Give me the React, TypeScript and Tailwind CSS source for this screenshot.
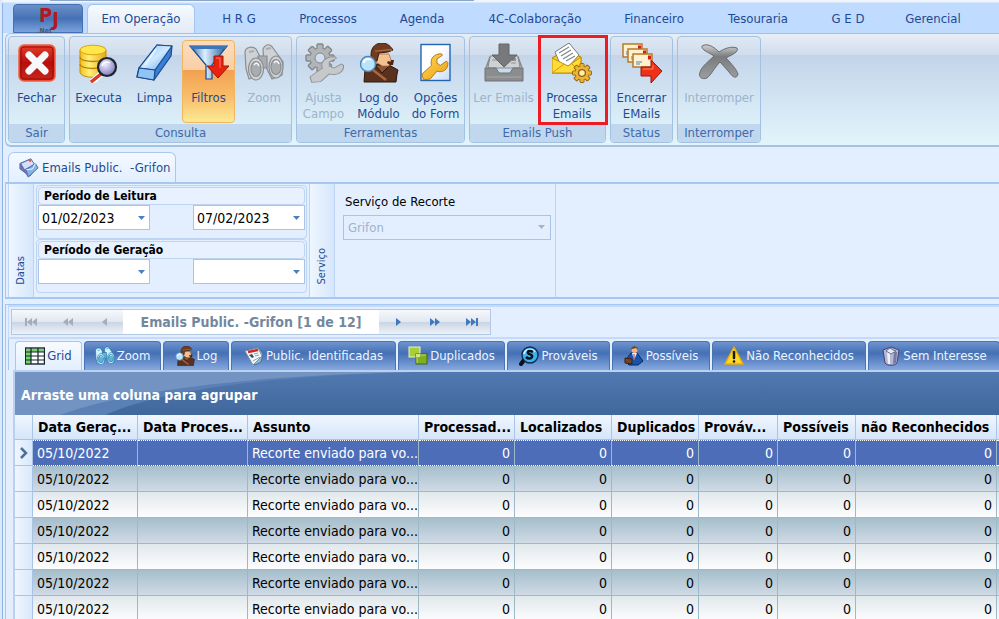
import { useState } from "react";
import type { ReactNode } from "react";
import clsx from "clsx";

/* ---------- Icons ---------- */

function LogoPJ() {
  return (
    <span className="flex items-start justify-center font-['DejaVu_Sans_Condensed',sans-serif] font-bold text-[#b01a20]">
      <span className="flex flex-col items-end">
        <span className="text-xl leading-5">P</span>
        <span className="pt-0.5 text-[7px] leading-2 text-[#4b5560]">.Net</span>
      </span>
      <span className="pt-1 text-xl leading-5">J</span>
    </span>
  );
}

function CloseIcon() {
  return (
    <svg viewBox="0 0 40 40" className="size-10">
      <defs>
        <linearGradient id="closeRed" x1="0" y1="0" x2="0" y2="1">
          <stop offset="0" stopColor="#e2402c" />
          <stop offset="0.5" stopColor="#b80d0c" />
          <stop offset="1" stopColor="#c8281c" />
        </linearGradient>
      </defs>
      <rect x="2" y="2" width="36" height="36" rx="5" fill="url(#closeRed)" stroke="#f0603f" strokeWidth="1.5" />
      <rect x="4" y="4" width="32" height="32" rx="3" fill="none" stroke="#9c0a08" />
      <path d="m12 12 16 16M28 12 12 28" stroke="#f6f8fb" strokeWidth="7" strokeLinecap="round" />
    </svg>
  );
}

function DatabaseIcon() {
  return (
    <svg viewBox="0 0 40 40" className="size-10">
      <defs>
        <linearGradient id="dbGold" x1="0" y1="0" x2="1" y2="0">
          <stop offset="0" stopColor="#f4bf1a" />
          <stop offset="0.35" stopColor="#fff07a" />
          <stop offset="1" stopColor="#e8a911" />
        </linearGradient>
        <radialGradient id="lensViolet" cx="0.4" cy="0.35" r="0.7">
          <stop offset="0" stopColor="#f1f0ff" />
          <stop offset="1" stopColor="#7775b5" />
        </radialGradient>
      </defs>
      <path d="M1 7v22c0 7 26 7 26 0V7Z" fill="url(#dbGold)" stroke="#c48d0b" />
      <path d="M1 14c0 6 26 6 26 0M1 21c0 6 26 6 26 0" fill="none" stroke="#b8860b" strokeWidth="1.3" />
      <ellipse cx="14" cy="7" rx="13" ry="4.8" fill="#ffe64a" stroke="#d9a515" />
      <path d="m22 31-9 8" stroke="#fff" strokeWidth="6" />
      <path d="m22 31-10 8" stroke="#d83a23" strokeWidth="3.5" />
      <circle cx="28" cy="24" r="9" fill="url(#lensViolet)" stroke="#20242e" strokeWidth="2.2" />
      <path d="M23 23c1-4 5-5 8-3" fill="none" stroke="#fff" strokeWidth="1.5" />
    </svg>
  );
}

function EraserIcon() {
  return (
    <svg viewBox="0 0 40 40" className="size-10">
      <defs>
        <linearGradient id="eraserBlue" x1="0" y1="0" x2="1" y2="1">
          <stop offset="0" stopColor="#8ec6f7" />
          <stop offset="0.5" stopColor="#cfe8ff" />
          <stop offset="1" stopColor="#5ba0ea" />
        </linearGradient>
      </defs>
      <g stroke="#174a8e" strokeWidth="1.2" strokeLinejoin="round">
        <path d="M22 2 37 3 36 13 19 37 2 34 4 25Z" fill="#3a7fd5" />
        <path d="M22 2 37 3 20 27 4 25Z" fill="url(#eraserBlue)" />
        <path d="m4 25 16 2-1 10L2 34Z" fill="#8fc4f5" />
      </g>
      <path d="M21 6 10 22" stroke="#fff" strokeWidth="1.5" opacity=".7" />
    </svg>
  );
}

function FunnelIcon() {
  return (
    <svg viewBox="0 0 40 40" className="size-10">
      <defs>
        <linearGradient id="funnelBlue" x1="0" y1="0" x2="1" y2="0">
          <stop offset="0" stopColor="#2d66a8" />
          <stop offset="0.4" stopColor="#dcf0ff" />
          <stop offset="1" stopColor="#235795" />
        </linearGradient>
      </defs>
      <path d="M1 3h37L23 22v14h-6V22Z" fill="url(#funnelBlue)" stroke="#17498b" strokeWidth="1.2" />
      <path d="M1 3h37l-2 3H3Z" fill="#3c76b8" />
      <path d="M25 13h9v10h6L29 35 18 23h7Z" fill="#e9220f" stroke="#9f1409" />
      <path d="M27 15h4v10" fill="none" stroke="#ff7a5e" />
    </svg>
  );
}

function BinocularsIcon({ small }: { small?: boolean }) {
  const dark = small ? "#186d9c" : "#8a8e92";
  const mid = small ? "#5cb7df" : "#a9adb0";
  const light = small ? "#d5f3ff" : "#cfd2d4";
  return (
    <svg viewBox="0 0 40 40" className={small ? "size-5" : "size-10"}>
      <g stroke={dark} strokeWidth="1.2">
        <path d="M1 9C1 5 8 2 12 6l7 13-4 13-10 4L2 26Z" fill={light} />
        <path d="M19 6c3-6 8-5 10-1l10 14-1 13-10 4-8-16Z" fill={light} />
        <path d="M14 13h9v12h-9Z" fill={mid} />
        <ellipse cx="12" cy="26" rx="7.5" ry="11" fill={light} />
        <ellipse cx="12" cy="26" rx="5" ry="7.5" fill={mid} />
        <ellipse cx="32" cy="24" rx="7" ry="11" fill={light} />
        <ellipse cx="32" cy="24" rx="5" ry="7.5" fill={mid} />
      </g>
      <path d="M10 22c2-3 4-2 5 1M30 20c2-3 4-2 5 1" stroke="#f4f6f7" strokeWidth="1.5" fill="none" />
      <path d="m5 9 5-1M22 6l5-1" stroke={mid} strokeWidth="2" />
    </svg>
  );
}

function GearShape({ fill, stroke }: { fill: string; stroke: string }) {
  return (
    <g>
      {[0, 45, 90, 135].map((a) => (
        <rect key={a} x="-3" y="-14" width="6" height="28" rx="1" transform={`rotate(${a})`} fill={fill} stroke={stroke} strokeWidth="1.4" />
      ))}
      <circle r="10" fill={fill} stroke={stroke} strokeWidth="1" />
      {[0, 45, 90, 135].map((a) => (
        <rect key={a} x="-2.3" y="-11" width="4.6" height="22" transform={`rotate(${a})`} fill={fill} />
      ))}
    </g>
  );
}

function WrenchShape({ fill, stroke }: { fill: string; stroke: string }) {
  return (
    <path
      d="M2 40 0 32 14 20C11 11 18 3 29 4l1 2-8 5 0 6 5 3 9-6 2 2c1 9-7 15-16 12L12 39Z"
      fill={fill}
      stroke={stroke}
      strokeWidth="1.2"
      strokeLinejoin="round"
    />
  );
}

function AdjustIcon() {
  return (
    <svg viewBox="0 0 40 40" className="size-10">
      <g transform="translate(16 15)">
        <GearShape fill="#b2b5b7" stroke="#85888b" />
        <circle r="5" fill="#d1deed" stroke="#85888b" />
      </g>
      <g transform="translate(6 11) scale(.88 .71)">
        <WrenchShape fill="#c6c8ca" stroke="#909396" />
      </g>
    </svg>
  );
}

function DetectiveIcon({ small }: { small?: boolean }) {
  return (
    <svg viewBox="0 0 40 40" className={small ? "size-5" : "size-10"}>
      <path d="m5 39 1-12 10-6 14 1 9 5-1 4-1 8Z" fill="#59311d" stroke="#2a160d" />
      <path d="m17 23 6 7 7-7" fill="#8c5531" stroke="#2a160d" />
      <path d="M18 11h12l2 6-2 6h-7l-6-4Z" fill="#f3c08f" stroke="#9b643a" strokeWidth=".7" />
      <path d="M12 12C12 3 18 0 23 0c6 0 9 4 11 7l-5 2-9 1-2 8h-6Z" fill="#713b20" stroke="#3b1c0e" />
      <path d="M16 8c7 0 12-2 17-1" fill="none" stroke="#a66a3f" strokeWidth="1.3" />
      <path d="m29 18 3 1v-2h3l-1 5h-3l-3-2Z" fill="#4b2413" />
      <path d="m14 27 13 10" stroke="#ad653e" strokeWidth="2.5" />
      <circle cx="9" cy="21" r="7.5" fill="#b9e4fc" stroke="#4b88bd" strokeWidth="1.4" />
      <path d="M5 20c0-4 4-5 7-3" fill="none" stroke="#fff" strokeWidth="2" />
    </svg>
  );
}

function FormOptionsIcon() {
  return (
    <svg viewBox="0 0 40 40" className="size-10">
      <defs>
        <linearGradient id="formSheet" x1="0" y1="0" x2="1" y2="1">
          <stop offset="0.4" stopColor="#ffffff" />
          <stop offset="1" stopColor="#c9dcfa" />
        </linearGradient>
        <linearGradient id="wrenchGold" x1="0" y1="0" x2="1" y2="1">
          <stop offset="0" stopColor="#ffd95c" />
          <stop offset="1" stopColor="#ee9f10" />
        </linearGradient>
      </defs>
      <rect x="5" y="1.5" width="29" height="36" fill="url(#formSheet)" stroke="#2364b4" strokeWidth="1.4" />
      <g transform="translate(6 8) scale(.68 .72)">
        <WrenchShape fill="url(#wrenchGold)" stroke="#a96c0b" />
      </g>
    </svg>
  );
}

function InboxIcon() {
  return (
    <svg viewBox="0 0 40 40" className="size-10">
      <path d="M6 13h28l2 12H4Z" fill="#cfd2d4" stroke="#898c8f" />
      <path d="M8 17h18M27 20h5" stroke="#a5a8aa" strokeWidth="1.5" />
      <path d="M28 15h4v3h-4Z" fill="#8a8c8e" />
      <path d="M1 25h11l3 5h11l3-5h10v13H1Z" fill="#8a8c8e" stroke="#717376" />
      <path d="M2 25 6 14M38 25l-4-11" stroke="#85888a" strokeWidth="1.5" />
      <path d="M3 34h34" stroke="#a7a9ab" />
      <path d="M15 1h10v11h8L20 24 8 12h7Z" fill="#77797c" stroke="#626467" />
    </svg>
  );
}

function ProcessMailIcon() {
  return (
    <svg viewBox="0 0 40 40" className="size-10">
      <path d="M0 15 14 7l15 7v16H0Z" fill="#f7cc1b" stroke="#b78309" />
      <path d="M3 9 17 0l10 12-10 11H9Z" fill="#fff" stroke="#747a81" />
      <path d="m7 10 10-6M9 13l10-6M11 16l10-6M14 18l9-5" stroke="#7f858c" strokeWidth="1.2" />
      <path d="M0 15v15h29V14l-13 9Z" fill="#ffdd36" stroke="#c38c0a" />
      <path d="m0 30 12-9M29 30l-9-9" stroke="#d39a0c" />
      <g transform="translate(30 30) scale(.68)">
        <GearShape fill="#edb537" stroke="#946112" />
        <circle r="5" fill="#fff0b0" stroke="#946112" strokeWidth="2" />
      </g>
    </svg>
  );
}

function CloseMailsIcon() {
  return (
    <svg viewBox="0 0 40 40" className="size-10">
      {[0, 1, 2].map((i) => (
        <g key={i} transform={`translate(${i * 5} ${i * 5})`}>
          <rect x="1" y="1" width="19" height="13" fill="#fff0ce" stroke="#b8792d" strokeWidth="1.5" />
          <rect x="16" y="2.5" width="3" height="4" fill="#d91912" />
          <path d="M4 9h6M4 11h4" stroke="#4585c7" strokeWidth="1.2" />
        </g>
      ))}
      <path d="M19 24h10v-7l11 11-11 12v-7H19Z" fill="#ef3217" stroke="#98170d" />
      <path d="M21 26h10v-4" fill="none" stroke="#ff8066" />
    </svg>
  );
}

function InterruptIcon() {
  return (
    <svg viewBox="0 0 40 40" className="size-10">
      <defs>
        <linearGradient id="crossGray" x1="0" y1="0" x2="0" y2="1">
          <stop offset="0" stopColor="#d0d2d3" />
          <stop offset="0.35" stopColor="#797b7d" />
          <stop offset="1" stopColor="#9b9d9e" />
        </linearGradient>
      </defs>
      <path
        d="M3 3c5-3 11 0 17 6 6-4 13-6 18-4 2 4-4 6-11 10 5 5 11 12 12 16-1 5-5 4-9-2l-9-10c-5 5-9 13-13 16-5 2-9-1-7-6 2-6 9-11 14-16C9 9 2 7 3 3Z"
        fill="url(#crossGray)"
        stroke="#6c6e70"
      />
    </svg>
  );
}

function MailStackIcon() {
  return (
    <svg viewBox="0 0 22 22" className="size-5">
      <path d="m1 6 12-5 6 10-7 9L1 12Z" fill="#7184b9" stroke="#53629c" />
      <path d="M2 6 13 1l4 6-11 6Z" fill="#d5dff6" stroke="#5a73b0" />
      <path d="m8 13 10-7 3 5-11 10Z" fill="#86b2e8" stroke="#496bab" />
      <path d="m6 13 4 7M2 8l8 12" fill="none" stroke="#6a6fb0" strokeWidth="1.5" />
      <path d="m8 13 7-1 3-6" fill="none" stroke="#fff" />
      <path d="m11 2 2 2" stroke="#e24b43" strokeWidth="2" />
    </svg>
  );
}

function GridIcon() {
  return (
    <svg viewBox="0 0 20 20" className="size-5">
      <rect x="0.5" y="2" width="19" height="16" fill="#fff" stroke="#16242c" strokeWidth="1.4" />
      <path d="M1 3h18v3H1ZM1 6h5v11H1Z" fill="#71d665" />
      <path d="M0 6h20M0 10h20M0 14h20M6 2v16M13 2v16" stroke="#16242c" strokeWidth="1.2" />
    </svg>
  );
}

function NewspaperIcon() {
  return (
    <svg viewBox="0 0 20 20" className="size-5">
      <path d="m4 6 11-4 4 6-2 8-6 3Z" fill="#8fbbd3" stroke="#466e96" />
      <path d="m1 5 13-3 4 8-9 9Z" fill="#f5f8fb" stroke="#7992a8" />
      <path d="m4 6 10-2" stroke="#db2020" strokeWidth="2.5" />
      <path d="m5 9 3-1 2 3-2 1Z" fill="#344e68" />
      <path d="m10 8 4-1M11 10l4-1M9 15l7-4" stroke="#8d9ba7" />
    </svg>
  );
}

function DuplicateIcon() {
  return (
    <svg viewBox="0 0 20 20" className="size-5">
      <rect x="1" y="1" width="11" height="10" fill="#a7cf3a" stroke="#e6f5b8" />
      <rect x="8" y="8" width="11" height="10" fill="#7fae20" stroke="#426713" />
      <path d="M8 8h4v3H8Z" fill="#d9ed98" />
      <path d="M9 17V9h9" fill="none" stroke="#c4de76" />
    </svg>
  );
}

function ProbableIcon() {
  return (
    <svg viewBox="0 0 20 20" className="size-5">
      <path d="m5 14-3 4" stroke="#0b1017" strokeWidth="4" strokeLinecap="round" />
      <circle cx="11" cy="9" r="8" fill="#38b4f5" stroke="#102b4f" strokeWidth="1.4" />
      <path d="M5 8c1-5 8-6 11-2" fill="none" stroke="#c5f0ff" strokeWidth="2" />
      <path d="M14 6c-3-2-6-1-5 1 1 2 5 1 4 4-1 2-4 2-6 0" fill="none" stroke="#0b1017" strokeWidth="2.5" />
    </svg>
  );
}

function PersonIcon() {
  return (
    <svg viewBox="0 0 20 20" className="size-5">
      <path d="m1 15 6-8h6l6 8-5 4H5Z" fill="#1754ad" stroke="#0b265e" />
      <path d="m8 7 2 7 3-7Z" fill="#f4f7ff" />
      <path d="M10 8v5" stroke="#b32218" />
      <circle cx="10.5" cy="4" r="3" fill="#efb580" />
      <path d="M7 4c0-5 7-5 7 0l-2-2-4 1Z" fill="#74421d" />
      <path d="m1 12 7 1v5l-7-1Z" fill="#754423" stroke="#3d210f" />
    </svg>
  );
}

function WarningIcon() {
  return (
    <svg viewBox="0 0 20 20" className="size-5">
      <path d="M10 1 19 18H1Z" fill="#ffda25" stroke="#e9aa12" strokeWidth="1.5" strokeLinejoin="round" />
      <path d="M10 6v6" stroke="#161616" strokeWidth="2.5" strokeLinecap="round" />
      <circle cx="10" cy="15.5" r="1.3" fill="#161616" />
    </svg>
  );
}

function TrashIcon() {
  return (
    <svg viewBox="0 0 20 20" className="size-5">
      <path d="m2 4 8-3 8 3-2 13c-2 3-10 3-12 0Z" fill="#b6b7d3" stroke="#41426d" />
      <path d="M6 6h3v12H7Z" fill="#eeeefa" />
      <path d="M13 6h3l-1 11-3 1Z" fill="#7777a4" />
      <path d="m5 5 4-3 3 2 3 1-5 3Z" fill="#e4edf6" stroke="#697390" />
    </svg>
  );
}

function DownArrow({ muted }: { muted?: boolean }) {
  return (
    <svg viewBox="0 0 8 4" className={clsx("h-1 w-2", muted ? "fill-[#9db4d2]" : "fill-[#4a80c0]")}>
      <path d="M1 0h7L4.5 4Z" />
    </svg>
  );
}

function NavArrow({ count, bar, back }: { count: number; bar?: boolean; back?: boolean }) {
  return (
    <svg viewBox="0 0 14 8" className={clsx("h-2 w-3.5", back ? "rotate-180 fill-[#a5adb8]" : "fill-[#3f78be]")}>
      {count === 1 && <path d="M5 0v8l5-4Z" />}
      {count === 2 && <path d={bar ? "M1 0v8l5-4ZM6 0v8l5-4ZM11 0h2v8h-2Z" : "M2 0v8l5-4ZM7 0v8l5-4Z"} />}
    </svg>
  );
}

/* ---------- Data ---------- */

const menuTabs = [
  { label: "H R G", width: "w-[88px]" },
  { label: "Processos", width: "w-[90px]" },
  { label: "Agenda", width: "w-[98px]" },
  { label: "4C-Colaboração", width: "w-[128px]" },
  { label: "Financeiro", width: "w-[110px]" },
  { label: "Tesouraria", width: "w-[98px]" },
  { label: "G E D", width: "w-[82px]" },
  { label: "Gerencial", width: "w-[88px]" },
];

const gridTabs = [
  { label: "Grid", icon: <GridIcon />, width: "w-[67px]" },
  { label: "Zoom", icon: <BinocularsIcon small />, width: "w-[77px]" },
  { label: "Log", icon: <DetectiveIcon small />, width: "w-[66px]" },
  { label: "Public. Identificadas", icon: <NewspaperIcon />, width: "w-[165px]" },
  { label: "Duplicados", icon: <DuplicateIcon />, width: "w-[107px]" },
  { label: "Prováveis", icon: <ProbableIcon />, width: "w-[103px]" },
  { label: "Possíveis", icon: <PersonIcon />, width: "w-[98px]" },
  { label: "Não Reconhecidos", icon: <WarningIcon />, width: "w-[154px]" },
  { label: "Sem Interesse", icon: <TrashIcon />, width: "w-[132px]" },
];

const columns = [
  { label: "Data Geraç...", width: "w-[105px]" },
  { label: "Data Proces...", width: "w-[110px]" },
  { label: "Assunto", width: "w-[171px]" },
  { label: "Processad...", width: "w-[96px]" },
  { label: "Localizados", width: "w-[97px]" },
  { label: "Duplicados", width: "w-[87px]" },
  { label: "Prováv...", width: "w-[79px]" },
  { label: "Possíveis", width: "w-[78px]" },
  { label: "não Reconhecidos", width: "w-[141px]" },
];

const rows = Array.from({ length: 7 }, (_, id) => ({
  id,
  cells: ["05/10/2022", "", "Recorte enviado para vo...", "0", "0", "0", "0", "0", "0"],
}));

/* ---------- Pieces ---------- */

function RibbonGroup({ title, children }: { title: string; children: ReactNode }) {
  return (
    <section className="flex shrink-0 flex-col rounded border border-[#a3c1e2] bg-[linear-gradient(#dfe8f3,#d0dded_17%,#c4d5ea_17%,#dcf0f9_85%)]">
      <div className="flex flex-1 gap-0.5 pt-[3px]">{children}</div>
      <h2 className="h-[18px] rounded-b bg-[#c0d7ee] text-center leading-[18px] text-[#3e6aaa]">{title}</h2>
    </section>
  );
}

interface RibbonButtonProps {
  icon: ReactNode;
  label: string;
  width: string;
  disabled?: boolean;
  active?: boolean;
  highlight?: boolean;
}

function RibbonButton({ icon, label, width, disabled, active, highlight }: RibbonButtonProps) {
  return (
    <button
      type="button"
      disabled={disabled}
      className={clsx(
        "relative flex h-[83px] flex-col items-center rounded-sm border pt-0.5",
        width,
        active
          ? "border-[#f0b55e] bg-[linear-gradient(#fbdcc0,#f9cfa6_36%,#f2a050_36%,#f8bf6c_70%,#fde993)]"
          : "border-transparent",
        disabled ? "text-[#9db3cb]" : "text-[#1e4a94]"
      )}
    >
      {icon}
      <span className="mt-[7px] block text-center leading-4 whitespace-pre">{label}</span>
      {highlight && (
        <span className="pointer-events-none absolute -top-1.5 -right-1 -bottom-[3px] -left-0.5 border-3 border-[#ed1c24]" />
      )}
    </button>
  );
}

function DateField({ label, initial }: { label: string; initial: string }) {
  const [value, setValue] = useState(initial);
  return (
    <div className="flex h-[25px] w-28 items-center border border-[#a9c4e6] bg-white">
      <input
        aria-label={label}
        value={value}
        onChange={(e) => setValue(e.target.value)}
        className="h-full min-w-0 flex-1 bg-transparent pl-[3px] text-sm text-black outline-none"
      />
      <button type="button" aria-label={`Abrir ${label}`} className="flex h-full w-4 items-center justify-center">
        <DownArrow />
      </button>
    </div>
  );
}

function PeriodBox({ title, from, to }: { title: string; from: string; to: string }) {
  return (
    <fieldset className="h-[54px] rounded-sm border border-[#bdd5f3] p-px">
      <div className="h-[18px] rounded-sm border border-[#bdd5f3] bg-[#e7f1ff] pl-[5px] text-xs leading-4 font-bold text-black">
        {title}
      </div>
      <div className="flex justify-between">
        <DateField label={`${title} inicial`} initial={from} />
        <DateField label={`${title} final`} initial={to} />
      </div>
    </fieldset>
  );
}

function SideLabel({ children }: { children: ReactNode }) {
  return (
    <div className="flex w-[26px] shrink-0 items-end justify-center border-x border-[#bdd5f3] bg-linear-to-r from-[#eef6ff] to-[#d6e7fb] pb-3">
      <span className="rotate-180 text-[11px] text-[#1e4a94] [writing-mode:vertical-rl]">{children}</span>
    </div>
  );
}

function NavButton({ label, back, children }: { label: string; back?: boolean; children: ReactNode }) {
  return (
    <button
      type="button"
      aria-label={label}
      disabled={back}
      className="flex h-full w-[37px] items-center justify-center bg-[linear-gradient(#f6f9fc,#e1e7ef_50%,#c9d4e2_50%,#eef2f7)]"
    >
      {children}
    </button>
  );
}

/* ---------- Page ---------- */

export default function App() {
  const [activeTab, setActiveTab] = useState("Grid");
  const [selectedRow, setSelectedRow] = useState(0);

  return (
    <div className="flex h-screen flex-col overflow-hidden border-l-2 border-[#dbe9fb] bg-[#e3efff] font-['DejaVu_Sans_Condensed','DejaVu_Sans',sans-serif] text-[13px] text-[#1e4a94]">
      {/* Menu */}
      <div className="h-[3px] shrink-0 border-b border-[#d9e8fd] bg-[#eff5fd]">
        <div className="ml-12 h-px w-[424px] bg-[#8ba6cb]" />
      </div>
      <nav className="flex h-[30px] shrink-0 items-end border-l border-[#8fb4e6] bg-[#bfdbff] pl-2.5">
        <button
          type="button"
          aria-label="PJ.Net"
          className="mr-1 flex h-[29px] w-[70px] items-start justify-center rounded-t border border-[#4571b0] bg-linear-to-b from-[#6b90c8] via-[#4571b5] via-50% to-[#7ba3dc]"
        >
          <LogoPJ />
        </button>
        <button
          type="button"
          className="h-[29px] w-[108px] rounded-t-md border border-b-0 border-[#a4c5f0] bg-linear-to-b from-[#f6faff] to-[#e3ebf6]"
        >
          Em Operação
        </button>
        {menuTabs.map((tab) => (
          <button key={tab.label} type="button" className={clsx("h-[29px] shrink-0 whitespace-nowrap", tab.width)}>
            {tab.label}
          </button>
        ))}
      </nav>

      {/* Ribbon */}
      <div className="flex h-[114px] shrink-0 border-l border-[#8fb4e6] pl-0.5">
        <div className="flex flex-1 gap-1 rounded-l-md border-t border-b-2 border-l border-[#a3c1e2] bg-[linear-gradient(#e8eef7,#d0dcec_19%,#c3d4ea_19%,#e2f5fb)] pt-0.5 pb-0.5 pl-0.5">
          <RibbonGroup title="Sair">
            <RibbonButton icon={<CloseIcon />} label="Fechar" width="w-[55px]" />
          </RibbonGroup>
          <RibbonGroup title="Consulta">
            <RibbonButton icon={<DatabaseIcon />} label="Executa" width="w-[57px]" />
            <RibbonButton icon={<EraserIcon />} label="Limpa" width="w-[51px]" />
            <RibbonButton icon={<FunnelIcon />} label="Filtros" width="w-[53px]" active />
            <RibbonButton icon={<BinocularsIcon />} label="Zoom" width="w-[54px]" disabled />
          </RibbonGroup>
          <RibbonGroup title="Ferramentas">
            <RibbonButton icon={<AdjustIcon />} label={"Ajusta\nCampo"} width="w-[53px]" disabled />
            <RibbonButton icon={<DetectiveIcon />} label={"Log do\nMódulo"} width="w-[53px]" />
            <RibbonButton icon={<FormOptionsIcon />} label={"Opções\ndo Form"} width="w-[57px]" />
          </RibbonGroup>
          <RibbonGroup title="Emails Push">
            <RibbonButton icon={<InboxIcon />} label="Ler Emails" width="w-[67px]" disabled />
            <RibbonButton icon={<ProcessMailIcon />} label={"Processa\nEmails"} width="w-[66px]" highlight />
          </RibbonGroup>
          <RibbonGroup title="Status">
            <RibbonButton icon={<CloseMailsIcon />} label={"Encerrar\nEMails"} width="w-[61px]" />
          </RibbonGroup>
          <RibbonGroup title="Interromper">
            <RibbonButton icon={<InterruptIcon />} label="Interromper" width="w-[82px]" disabled />
          </RibbonGroup>
        </div>
      </div>

      {/* Open form */}
      <div className="flex min-h-0 flex-1 flex-col border-l border-[#8fb4e6] pt-[5px] pl-0.5">
        <div className="flex h-[30px] shrink-0 pl-[3px]">
          <button
            type="button"
            className="flex w-[168px] items-center gap-[3px] rounded-t-md border border-b-0 border-[#a8c8f0] bg-linear-to-b from-[#f4f9ff] to-[#e3efff] pl-2.5 whitespace-pre"
          >
            <MailStackIcon />
            Emails Public.  -Grifon
          </button>
        </div>

        {/* Filters */}
        <div className="flex h-[117px] shrink-0 border-y-2 border-l border-[#a6c7ef] pl-0.5">
          <SideLabel>Datas</SideLabel>
          <div className="flex w-[275px] shrink-0 flex-col px-0.5 pt-px">
            <PeriodBox title="Período de Leitura" from="01/02/2023" to="07/02/2023" />
            <PeriodBox title="Período de Geração" from="" to="" />
          </div>
          <SideLabel>Serviço</SideLabel>
          <div className="w-[221px] border-r border-[#bdd5f3] px-1 pl-2">
            <label htmlFor="servico" className="block pt-2 pb-[3px] pl-0.5 leading-5 text-black">
              Serviço de Recorte
            </label>
            <div className="relative">
              <select
                id="servico"
                disabled
                className="h-[25px] w-full appearance-none border border-[#a9c4e6] bg-[#e3efff] pl-1 text-[#9db3cb] opacity-100"
              >
                <option>Grifon</option>
              </select>
              <span className="pointer-events-none absolute top-2.5 right-1.5">
                <DownArrow muted />
              </span>
            </div>
          </div>
        </div>

        <div className="mt-[5px] flex min-h-0 flex-1 flex-col border-t border-l border-[#a6c7ef] pl-0.5">
          {/* Record navigator */}
          <div className="flex h-[34px] shrink-0 items-center border-y-2 border-l border-[#c3dafb] pl-0.5">
            <div className="flex h-[26px] w-[480px] items-center border border-[#b3c8e3]">
              <NavButton label="Primeiro" back><NavArrow count={2} bar back /></NavButton>
              <NavButton label="Página anterior" back><NavArrow count={2} back /></NavButton>
              <NavButton label="Anterior" back><NavArrow count={1} back /></NavButton>
              <div className="flex h-full flex-1 items-center justify-center bg-white text-sm font-bold text-[#74889d]">
                Emails Public. -Grifon [1 de 12]
              </div>
              <NavButton label="Próximo"><NavArrow count={1} /></NavButton>
              <NavButton label="Próxima página"><NavArrow count={2} /></NavButton>
              <NavButton label="Último"><NavArrow count={2} bar /></NavButton>
            </div>
          </div>

          {/* Grid tabs */}
          <div className="flex h-[31px] shrink-0 items-end gap-0.5 border-l border-[#a6c7ef] pt-0.5 pl-1.5">
            {gridTabs.map((tab) => (
              <button
                key={tab.label}
                type="button"
                onClick={() => setActiveTab(tab.label)}
                className={clsx(
                  "flex h-full shrink-0 items-center justify-center gap-0.5 rounded-t border border-b-0 whitespace-nowrap",
                  tab.width,
                  activeTab === tab.label
                    ? "border-[#a6c7ef] bg-linear-to-b from-[#f7fbff] to-[#e3efff]"
                    : "border-[#4a74b4] bg-linear-to-b from-[#6f94cf] via-[#4570b5] via-40% to-[#86a9e0] text-[#eef4ff]"
                )}
              >
                {tab.icon}
                {tab.label}
              </button>
            ))}
          </div>

          {/* Grid */}
          <div className="ml-[5px] flex min-h-0 flex-1 flex-col overflow-hidden border-t-2 border-l-2 border-[#b9d0ee] bg-white">
            <div className="relative h-[43px] shrink-0 bg-linear-to-b from-[#5179b1] to-[#41689c]">
              <svg viewBox="0 0 400 42" preserveAspectRatio="none" className="absolute inset-y-0 left-0 h-full w-[400px]">
                <path d="M0 0h400C260 4 150 16 90 42H0Z" fill="#5a80b5" />
                <path d="M0 0h400C240 3 110 18 45 42H0Z" fill="#7394c2" />
              </svg>
              <p className="relative pl-1.5 text-sm leading-[46px] font-bold text-white">Arraste uma coluna para agrupar</p>
            </div>
            <table className="w-full table-fixed border-separate border-spacing-0 text-sm">
              <thead>
                <tr className="h-[25px] text-left text-black">
                  <th className="w-[18px] border-r border-b border-[#a9c4e4] bg-linear-to-b from-[#f1f7ff] to-[#d5e5f9]" />
                  {columns.map((col) => (
                    <th
                      key={col.label}
                      className={clsx(
                        "border-r border-b border-[#a9c4e4] bg-linear-to-b from-[#f1f7ff] to-[#d5e5f9] p-0 pl-[5px] leading-4 whitespace-nowrap",
                        col.width
                      )}
                    >
                      {col.label}
                    </th>
                  ))}
                  <th className="border-b border-[#a9c4e4] bg-linear-to-b from-[#f1f7ff] to-[#d5e5f9] p-0" />
                </tr>
              </thead>
              <tbody>
                {rows.map((row) => {
                  const selected = row.id === selectedRow;
                  const cellColor = selected
                    ? "bg-[#4e6db8] text-white border-y border-y-white [border-bottom-style:dotted] [border-top-style:dotted]"
                    : row.id % 2
                      ? "bg-linear-to-b from-[#a5becb] to-[#d0dbe6] text-black border-b border-b-[#9cb9c8]"
                      : "bg-linear-to-b from-[#e1e8ec] to-[#fdfdfe] text-black border-b border-b-[#9cb9c8]";
                  return (
                    <tr key={row.id} onClick={() => setSelectedRow(row.id)} className="h-[26px]">
                      <td className="border-r border-b border-[#a9c4e4] bg-linear-to-r from-[#eff6ff] to-[#d9e8fb] p-0">
                        {selected && (
                          <svg viewBox="0 0 8 12" className="mx-auto h-3 w-2">
                            <path d="m1 1 5 5-5 5" fill="none" stroke="#4d7196" strokeWidth="2.5" />
                          </svg>
                        )}
                      </td>
                      {row.cells.map((cell, i) => (
                        <td
                          key={i}
                          className={clsx(
                            "border-r border-r-[#9cb9c8] px-1 py-0 leading-4 whitespace-nowrap",
                            cellColor,
                            i > 2 && "text-right"
                          )}
                        >
                          {cell}
                        </td>
                      ))}
                      <td className={cellColor} />
                    </tr>
                  );
                })}
              </tbody>
            </table>
          </div>
        </div>
      </div>
    </div>
  );
}
